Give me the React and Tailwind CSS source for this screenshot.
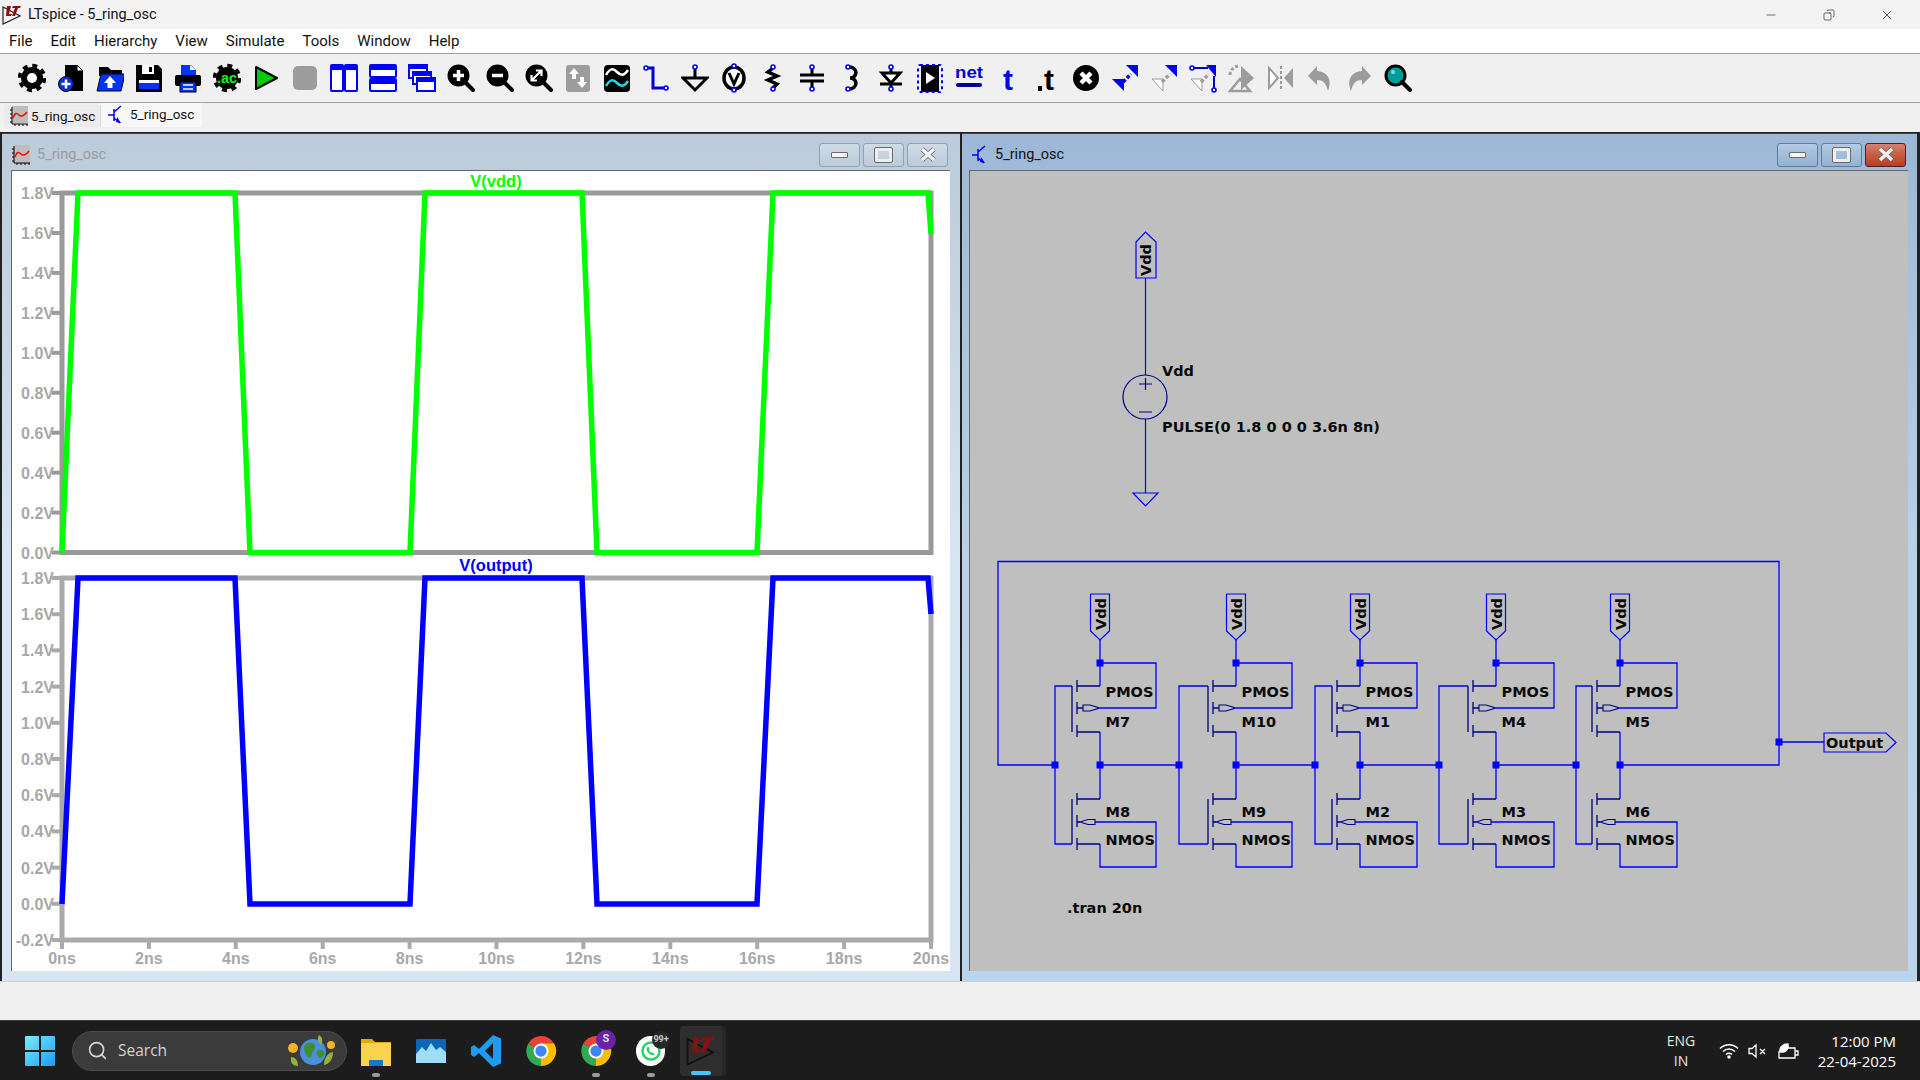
import React from 'react';
import { Search, Minus, X, Copy } from 'lucide-react';

const GREY = '#9c9c9c';

const Mag = ({ children, lens = 'black' }) => (
  <>
    <circle cx="11.5" cy="11.5" r="9.5" fill={lens} stroke="black" strokeWidth="3" />
    <path d="M18 18l8 8" stroke="black" strokeWidth="4" strokeLinecap="round" />
    {children}
  </>
);

const Gear = ({ children }) => (
  <>
    <circle cx="14" cy="14" r="11" fill="black" />
    <circle cx="14" cy="14" r="12.5" fill="none" stroke="black" strokeWidth="3.5" strokeDasharray="5 4.8" />
    {children}
  </>
);

const pin = (x, y) => <circle cx={x} cy={y} r="2" fill="white" stroke="#0000ff" strokeWidth="1.6" />;

// toolbar drawings, in order, each on a 28x28 canvas
const toolIcons = [
  <Gear><circle cx="14" cy="14" r="5" fill="white" /></Gear>,
  <>
    <path d="M8 1h12l6 6v20H8z" fill="black" />
    <path d="M20 1l6 6h-6z" fill="white" stroke="black" />
    <circle cx="9" cy="20" r="7.5" fill="#0033dd" stroke="black" />
    <path d="M9 15.5v9M4.5 20h9" stroke="white" strokeWidth="2.5" />
  </>,
  <>
    <path d="M3 3h9l3 3h11v6H3z" fill="black" />
    <path d="M5 10h24l-4 17H1z" fill="#0033ff" stroke="black" />
    <path d="M14 12l6 7h-3.500v5h-5v-5H8z" fill="white" />
  </>,
  <>
    <path d="M1 1h22l4 4v23H1z" fill="black" />
    <rect x="7" y="1" width="12" height="9" fill="white" />
    <rect x="14" y="3" width="3" height="5" fill="black" />
    <rect x="4" y="16" width="20" height="9" fill="#0033ff" />
    <rect x="4" y="16" width="20" height="3" fill="white" />
  </>,
  <>
    <path d="M7 1h10l5 5v7H7z" fill="#0033ff" />
    <path d="M16 1v5h6" fill="white" />
    <rect x="1" y="11" width="26" height="11" rx="2" fill="black" />
    <rect x="6" y="18" width="16" height="10" fill="#0033ff" stroke="black" />
    <path d="M9 21h10M9 25h10" stroke="white" strokeWidth="1.500" />
  </>,
  <Gear>
    <text x="14" y="19" textAnchor="middle" className="font-['Liberation_Sans'] font-bold text-[15px] fill-[#00ff00]" textLength="20" lengthAdjust="spacingAndGlyphs">.ac</text>
  </Gear>,
  <path d="M4 3l21 11L4 25z" fill="#00cc00" stroke="black" strokeWidth="2" strokeLinejoin="round" />,
  <rect x="2" y="2" width="24" height="24" rx="5" fill={GREY} />,
  <>
    <rect x="1" y="1" width="12" height="26" rx="1" fill="white" stroke="#0000ff" strokeWidth="2" />
    <rect x="15" y="1" width="12" height="26" rx="1" fill="white" stroke="#0000ff" strokeWidth="2" />
    <rect x="1" y="1" width="12" height="5" fill="#0000ff" />
    <rect x="15" y="1" width="12" height="5" fill="#0000ff" />
  </>,
  <>
    <rect x="1" y="1" width="26" height="12" rx="1" fill="white" stroke="#0000ff" strokeWidth="2" />
    <rect x="1" y="15" width="26" height="12" rx="1" fill="white" stroke="#0000ff" strokeWidth="2" />
    <rect x="1" y="1" width="26" height="5" fill="#0000ff" />
    <rect x="1" y="15" width="26" height="5" fill="#0000ff" />
  </>,
  <>
    <rect x="1" y="1" width="18" height="13" fill="white" stroke="#0000ff" strokeWidth="2" />
    <rect x="1" y="1" width="18" height="4" fill="#0000ff" />
    <rect x="5" y="8" width="18" height="12" fill="white" stroke="#0000ff" strokeWidth="2" />
    <rect x="5" y="8" width="18" height="4" fill="#0000ff" />
    <rect x="9" y="14" width="18" height="13" fill="white" stroke="#0000ff" strokeWidth="2" />
    <rect x="9" y="14" width="18" height="4" fill="#0000ff" />
  </>,
  <Mag><path d="M11.500 6v11M6 11.500h11" stroke="white" strokeWidth="3.500" /></Mag>,
  <Mag><path d="M6 11.500h11" stroke="white" strokeWidth="3.500" /></Mag>,
  <Mag><path d="M7 16l9-9M11 6.500h5.500V12M12 16.500H6.500V11" stroke="white" strokeWidth="2.200" fill="none" /></Mag>,
  <>
    <rect x="2" y="1" width="24" height="27" rx="3" fill={GREY} />
    <path d="M10 4l5 6h-3v5H8v-5H5zM18 24l-5-6h3v-5h4v5h3z" fill="white" />
  </>,
  <>
    <rect x="1" y="1" width="26" height="27" rx="4" fill="black" />
    <path d="M3 11c4-7 7-7 11-3s7 4 11-2" stroke="white" strokeWidth="2.500" fill="none" />
    <path d="M3 22c4-7 7-7 11-3s7 4 11-2" stroke="#22d8e8" strokeWidth="2.500" fill="none" />
  </>,
  <>
    <path d="M5 4h6v20h11" stroke="#0000cc" strokeWidth="3" fill="none" />
    {pin(4, 4)}{pin(24, 24)}
  </>,
  <>
    <path d="M14 5v9M2 14h24L14 26z" stroke="black" strokeWidth="3" fill="none" />
    {pin(14, 3)}
  </>,
  <>
    <ellipse cx="14" cy="14" rx="10" ry="11" fill="white" stroke="black" strokeWidth="3.500" />
    <path d="M9 9l5 11 5-11" stroke="black" strokeWidth="3" fill="none" />
    {pin(14, 2)}{pin(14, 26)}
  </>,
  <>
    <path d="M14 4l-5 4 9 4-9 4 9 4-4 4" stroke="black" strokeWidth="3.500" fill="none" />
    {pin(14, 3)}{pin(14, 25)}
  </>,
  <>
    <path d="M14 4v7M14 17v7M2 11h24M2 17h24" stroke="black" strokeWidth="3" />
    {pin(14, 3)}{pin(14, 25)}
  </>,
  <>
    <path d="M11 3c9 0 9 11 1 11 8 0 8 11-1 11" stroke="black" strokeWidth="3.500" fill="none" />
    {pin(10, 3)}{pin(10, 25)}
  </>,
  <>
    <path d="M14 4v20M3 20h22" stroke="black" strokeWidth="3" fill="none" />
    <path d="M5 9h18L14 19z" fill="white" stroke="black" strokeWidth="3" />
    {pin(14, 3)}{pin(14, 25)}
  </>,
  <>
    <rect x="5" y="1" width="18" height="27" rx="1" fill="black" />
    <rect x="2" y="1" width="24" height="27" rx="2" fill="none" stroke="#0000ff" strokeWidth="2" strokeDasharray="3 3" />
    <path d="M10 8l9 6-9 6z" fill="white" />
  </>,
  <>
    <text x="14" y="14" textAnchor="middle" className="font-['Liberation_Sans'] font-bold text-[17px] fill-[#0000cc]" textLength="28" lengthAdjust="spacingAndGlyphs">net</text>
    <path d="M3 21h22" stroke="#000099" strokeWidth="4" strokeLinecap="round" />
  </>,
  <text x="14" y="26" textAnchor="middle" className="font-['Liberation_Sans'] font-bold text-[30px] fill-[#0000ee]">t</text>,
  <>
    <text x="16" y="26" textAnchor="middle" className="font-['Liberation_Sans'] font-bold text-[30px] fill-black">t</text>
    <rect x="5" y="22" width="4" height="5" fill="black" />
  </>,
  <>
    <circle cx="14" cy="14" r="13" fill="black" />
    <path d="M9 9l10 10M19 9L9 19" stroke="white" strokeWidth="4.500" />
  </>,
  <>
    <path d="M27 1v12L15 1z" fill="#0000ee" />
    <path d="M1 15h12v12z" fill="#0000ee" />
    <path d="M12 18l5-5 3-3" stroke="#0000ee" strokeWidth="3.500" strokeDasharray="3.500 2" />
  </>,
  <>
    <path d="M27 1v12L15 1z" fill="#0000ee" />
    <path d="M2 15h11v12z" fill="white" stroke={GREY} />
    <path d="M12 18l5-5 3-3" stroke={GREY} strokeWidth="3.500" strokeDasharray="3.500 2" />
  </>,
  <>
    <path d="M4 4h15" stroke="#0000cc" strokeWidth="2" />
    <path d="M27 1v12L17 1z" fill="#0000ee" />
    <path d="M2 15h11v12z" fill="white" stroke={GREY} />
    <path d="M12 18l8-8" stroke={GREY} strokeWidth="3.500" strokeDasharray="3.500 2" />
    <path d="M25 12v14" stroke="#0000cc" strokeWidth="2" />
    {pin(3, 4)}{pin(25, 26)}
  </>,
  <>
    <path d="M13 2l13 12-13 12z" fill={GREY} />
    <path d="M10 2C5 3 2 7 2 11" stroke={GREY} strokeWidth="3" strokeDasharray="3 2" fill="none" />
    <path d="M12 15L2 27h20z" fill="none" stroke={GREY} strokeWidth="2.500" />
  </>,
  <>
    <path d="M2 4l9 10-9 10z" fill="white" stroke={GREY} strokeWidth="2" />
    <path d="M26 4l-9 10 9 10z" fill={GREY} />
    <path d="M14 2v24" stroke={GREY} strokeWidth="2" strokeDasharray="3 2" />
  </>,
  <path d="M11 2L2 12l9 9v-5c6 0 9 3 11 11 4-10 1-19-11-20z" fill={GREY} />,
  <path d="M17 2l9 10-9 9v-5c-6 0-9 3-11 11C2 17 5 8 17 7z" fill={GREY} />,
  <Mag lens="#009c9c"><circle cx="9" cy="8" r="2" fill="#7fe0e0" /></Mag>,
];

const WaveIcon = () => (
  <svg width="18" height="20" viewBox="0 0 18 20">
    <rect x="2" width="16" height="17" fill="#bdbdbd" />
    <path d="M2 1v17h16M0 4h2M0 8h2M0 12h2M0 16h2M5 18v2M9 18v2M13 18v2M17 18v2" stroke="black" fill="none" />
    <path d="M3 12c2-6 4-5 6-3s5 1 8-3" stroke="#ff0000" strokeWidth="1.500" fill="none" />
  </svg>
);

const NpnIcon = () => (
  <svg width="15" height="20" viewBox="0 0 15 20">
    <path d="M0 10h6M6 4v12M6 7l7-6M6 13l6 5" stroke="#0000ff" strokeWidth="1.500" fill="none" />
    <path d="M9 12l4 6-5-1z" fill="#0000ff" />
  </svg>
);

const WinButton = ({ kind, active, red }) => {
  const cls = red
    ? 'bg-gradient-to-b from-[#d8806e] via-[#c45c45] to-[#b83d22] border-[#4a2030]'
    : active
    ? 'bg-gradient-to-b from-[#b4cbe3] via-[#a3bdd8] to-[#95b2d1] border-[#5f7a9a]'
    : 'bg-gradient-to-b from-[#cfdbe6] to-[#bccbda] border-[#8ea2b8]';
  return (
    <div className={`w-[41px] h-[24px] rounded-[3px] border flex items-center justify-center ${cls}`}>
      {kind === 'min' && <div className="w-[17px] h-[6px] bg-[#f6f6f6] border border-[#6a6a6a] rounded-[1px]" />}
      {kind === 'max' && <div className="w-[17px] h-[14px] bg-transparent border-[3px] border-[#eeeeee] outline outline-1 outline-[#6a6a6a] rounded-[1px]" />}
      {kind === 'close' && (
        <svg width="18" height="15" viewBox="0 0 18 15">
          <path d="M3 2l12 11M15 2L3 13" stroke="#666" strokeWidth="5" />
          <path d="M3 2l12 11M15 2L3 13" stroke="#f2f2f2" strokeWidth="3.500" />
        </svg>
      )}
    </div>
  );
};

const ChildWindow = ({ icon, title, active, className, children }) => (
  <div className={`flex flex-col border-t border-[#444] ${active ? 'bg-gradient-to-b from-[#9db8d7] via-[#b9d2ea] to-[#b9d4ec]' : 'bg-gradient-to-b from-[#bccbd9] via-[#d8e5f2] to-[#d8e5f2]'} ${className}`}>
    <div className="h-[36px] pt-[5px] flex items-center">
      <div className="w-[20px] flex items-center justify-center">{icon}</div>
      <span className={`ml-[6px] text-[14.500px] ${active ? 'text-[#111]' : 'text-[#9a9a9a]'}`}>{title}</span>
      <div className="ml-auto flex gap-[3px] mr-[2px]">
        <WinButton kind="min" active={active} />
        <WinButton kind="max" active={active} />
        <WinButton kind="close" active={active} red={active} />
      </div>
    </div>
    {children}
  </div>
);

const x0 = 62;
const nsPx = 43.45;
const upperV = ['1.8V', '1.6V', '1.4V', '1.2V', '1.0V', '0.8V', '0.6V', '0.4V', '0.2V', '0.0V'];
const lowerV = [...upperV, '-0.2V'];
const nsLabels = [0, 2, 4, 6, 8, 10, 12, 14, 16, 18, 20];
const wavePts = (hi, lo, endY) =>
  [[62, lo], [78, hi], [235, hi], [250, lo], [410, lo], [425, hi], [582, hi], [597, lo], [757, lo], [773, hi], [928, hi], [931, endY]]
    .map((p) => p.join(',')).join(' ');

const axisLabel = "font-['Liberation_Sans'] font-bold text-[16px] fill-[#a8a8a8]";

const WaveformPane = () => (
  <svg viewBox="12 171 938 800" className="block w-[939px] h-[801px] bg-white border-l border-t border-[#666]">
    {/* upper pane */}
    <rect x="62" y="193" width="869" height="359.500" fill="none" stroke="#999999" strokeWidth="5" />
    {upperV.map((v, i) => {
      const y = 193 + i * 39.95;
      return (
        <g key={v}>
          <path d={`M52 ${y}H62`} stroke="#999999" strokeWidth="4" />
          <text x="54" y={y + 6} textAnchor="end" className={axisLabel}>{v}</text>
        </g>
      );
    })}
    <polyline points={wavePts(193, 552.5, 234)} fill="none" stroke="#00ff00" strokeWidth="5.500" />
    <text x="496" y="187" textAnchor="middle" className="font-['Liberation_Sans'] font-bold text-[16.500px] fill-[#00ff00]">V(vdd)</text>

    {/* lower pane */}
    <rect x="62" y="578" width="869" height="362" fill="none" stroke="#aaaaaa" strokeWidth="5" />
    {lowerV.map((v, i) => {
      const y = 578 + i * 36.2;
      return (
        <g key={v}>
          <path d={`M52 ${y}H62`} stroke="#aaaaaa" strokeWidth="4" />
          <text x="54" y={y + 6} textAnchor="end" className={axisLabel}>{v}</text>
        </g>
      );
    })}
    {nsLabels.map((ns) => {
      const x = x0 + (ns / 2) * nsPx * 2;
      return (
        <g key={ns}>
          <path d={`M${x} 940V949`} stroke="#aaaaaa" strokeWidth="4" />
          <text x={x} y="964" textAnchor="middle" className={axisLabel}>{ns}ns</text>
        </g>
      );
    })}
    <polyline points={wavePts(578, 904, 614)} fill="none" stroke="#0000ff" strokeWidth="5.500" />
    <text x="496" y="571" textAnchor="middle" className="font-['Liberation_Sans'] font-bold text-[16.500px] fill-[#0000ff]">V(output)</text>
  </svg>
);

const WIRE = '#0000ff';
const SYM = '#000080';
const schemText = "font-['DejaVu_Sans'] font-bold text-[14.500px] fill-[#0a0a0a]";

const Dot = ({ x, y }) => <rect x={x - 3.5} y={y - 3.5} width="7" height="7" fill={WIRE} />;

const VddTag = ({ x, top, tip, shoulder }) => (
  <g>
    <path d={`M${x - 9.5} ${top}V${shoulder}L${x} ${tip}L${x + 9.5} ${shoulder}V${top}Z`} fill="none" stroke={WIRE} strokeWidth="1.200" />
    <text transform={`translate(${x + 6} 630) rotate(-90)`} className={schemText}>Vdd</text>
  </g>
);

const inverters = [
  { rail: 1055, d: 1100, box: 1156, p: 'M7', n: 'M8' },
  { rail: 1179, d: 1236, box: 1292, p: 'M10', n: 'M9' },
  { rail: 1315, d: 1360, box: 1417, p: 'M1', n: 'M2' },
  { rail: 1439, d: 1496, box: 1554, p: 'M4', n: 'M3' },
  { rail: 1576, d: 1620, box: 1677, p: 'M5', n: 'M6' },
];

const Inverter = ({ rail, d, box, p, n }) => {
  const g = d - 28;
  const c = d - 23;
  return (
    <g>
      <VddTag x={d} top={594} tip={640} shoulder={631} />
      {/* wires */}
      <path d={`M${d} 640V686M${d} 663H${box}V708H${d - 2}M${d} 732V799M${d} 844V867H${box}V822H${d - 5}M${rail} 765V686H${g}M${rail} 765V844H${g}`} fill="none" stroke={WIRE} strokeWidth="1.300" />
      {/* mos symbols */}
      <path d={`M${g} 686V732M${g} 799V844M${c} 680V692M${c} 702V714M${c} 725V737M${c} 793V805M${c} 815V827M${c} 838V850M${c} 686H${d}M${c} 732H${d}M${c} 799H${d}M${c} 844H${d}M${c} 708H${c + 6}M${c} 822H${c + 3}`} fill="none" stroke={SYM} strokeWidth="1.300" />
      <path d={`M${c + 6} 705H${c + 13}L${c + 21} 707.500V708.500L${c + 13} 711H${c + 6}Z`} fill="none" stroke={SYM} strokeWidth="1.100" />
      <path d={`M${c + 3} 822L${c + 11} 819.500H${c + 18}V824.500H${c + 11}Z`} fill="none" stroke={SYM} strokeWidth="1.100" />
      <Dot x={d} y={663} />
      <Dot x={d} y={765} />
      <Dot x={rail} y={765} />
      <text x={d + 5.5} y="697" className={schemText}>PMOS</text>
      <text x={d + 5.5} y="727" className={schemText}>{p}</text>
      <text x={d + 5.5} y="817" className={schemText}>{n}</text>
      <text x={d + 5.5} y="845" className={schemText}>NMOS</text>
    </g>
  );
};

const SchematicPane = () => (
  <svg viewBox="970 171 938 800" className="block w-[939px] h-[801px] bg-[#bfbfbf] border-l border-t border-[#666]">
    {/* supply */}
    <path d="M1136 278V242L1145.500 232L1156 242V278Z" fill="none" stroke={WIRE} strokeWidth="1.200" />
    <text transform="translate(1151 276) rotate(-90)" className={schemText}>Vdd</text>
    <path d="M1145.500 278V375M1145.500 419V493M1133 493H1158L1145.500 506Z" fill="none" stroke={WIRE} strokeWidth="1.200" />
    <circle cx="1145" cy="397" r="22" fill="none" stroke={SYM} strokeWidth="1.200" />
    <path d="M1145.500 378V390M1139 384H1152M1139 412H1152" stroke={SYM} strokeWidth="1.200" />
    <text x="1162" y="376" className={schemText}>Vdd</text>
    <text x="1162" y="432" className={schemText}>PULSE(0 1.8 0 0 0 3.6n 8n)</text>

    {/* ring */}
    <path d="M1055 765H998V561.500H1779V765H1620M1100 765H1179M1236 765H1315M1360 765H1439M1496 765H1576M1779 742H1824" fill="none" stroke={WIRE} strokeWidth="1.300" />
    {inverters.map((inv) => <Inverter key={inv.p} {...inv} />)}
    <Dot x={1779} y={742} />
    <path d="M1824 733H1886L1896 742.500L1886 752H1824Z" fill="none" stroke={WIRE} strokeWidth="1.200" />
    <text x="1826" y="748" className={schemText}>Output</text>
    <text x="1067" y="913" className={schemText}>.tran 20n</text>
  </svg>
);

const menus = ['File', 'Edit', 'Hierarchy', 'View', 'Simulate', 'Tools', 'Window', 'Help'];

const LtLogo = ({ size = 20, dark }) => (
  <svg width={size} height={size} viewBox="0 0 20 20">
    <path d="M1 2l17 9L1 19z" fill="none" stroke={dark ? '#111' : '#222'} strokeWidth="1.200" />
    <path d="M5 1h4l-2 8h3l-1 2H4zM11 1h8l-1 2h-2l-3 8h-3l3-8h-3z" fill="#8a1010" />
  </svg>
);

const TaskSlot = ({ children, dot, className = '' }) => (
  <div className={`relative w-[55px] h-[60px] flex items-center justify-center ${className}`}>
    {children}
    {dot && <div className="absolute bottom-[4px] left-1/2 -translate-x-1/2 w-[8px] h-[4px] rounded-full bg-[#9a9a9a]" />}
  </div>
);

const ChromeIcon = ({ size = 36 }) => (
  <svg width={size} height={size} viewBox="0 0 48 48">
    <path d="M24 24L7 14a20 20 0 0 1 34.500 0z" fill="#ea4335" />
    <path d="M24 44A20 20 0 0 1 7 14l17 10z" fill="#34a853" />
    <path d="M24 44a20 20 0 0 0 17.500-30H24z" fill="#fbbc04" />
    <circle cx="24" cy="24" r="10" fill="white" />
    <circle cx="24" cy="24" r="7.500" fill="#4285f4" />
  </svg>
);

export default function App() {
  return (
    <div className="w-[1920px] h-[1080px] flex flex-col overflow-hidden bg-[#f0f0f0] font-['Roboto'] text-[#111]">
      {/* title bar */}
      <div className="h-[29px] bg-[#f3f3f3] flex items-center pl-[2px] shrink-0">
        <LtLogo />
        <span className="ml-[6px] text-[14.500px]">LTspice - 5_ring_osc</span>
        <div className="ml-auto flex items-center">
          <div className="w-[58px] flex justify-center"><Minus size={14} strokeWidth={1} /></div>
          <div className="w-[58px] flex justify-center"><Copy size={12} strokeWidth={1.2} className="-scale-x-100" /></div>
          <div className="w-[58px] flex justify-center mr-[4px]"><X size={16} strokeWidth={1} /></div>
        </div>
      </div>

      {/* menu */}
      <div className="h-[24px] bg-white flex items-center pl-[9px] gap-[18px] text-[15px] shrink-0">
        {menus.map((m) => <span key={m}>{m}</span>)}
      </div>

      {/* toolbar */}
      <div className="h-[50px] bg-[#f0f0f0] border-y border-[#a0a0a0] flex items-center pl-[12px] shrink-0">
        {toolIcons.map((icon, i) => (
          <div key={i} className="w-[39.050px] flex justify-center">
            <svg width="28" height="40" viewBox="0 -6 28 40">{icon}</svg>
          </div>
        ))}
      </div>

      {/* tabs */}
      <div className="h-[30px] flex items-end pl-[4px] pb-[5px] border-b border-[#222] shrink-0 text-[13.500px]">
        <div className="w-[97px] h-[22px] flex items-center gap-[3px] pl-[6px] bg-[#ececec] border-r border-[#ddd]">
          <WaveIcon />
          <span>5_ring_osc</span>
        </div>
        <div className="w-[101px] h-[24px] flex items-center gap-[7px] pl-[7px] bg-[#f8f8f8]">
          <NpnIcon />
          <span className="-mt-px">5_ring_osc</span>
        </div>
      </div>

      {/* mdi area */}
      <div className="h-[848px] flex items-stretch pl-[2px] shrink-0 bg-[#222]">
        <ChildWindow className="w-[958px] pl-[9px] pr-[10px]" title="5_ring_osc" icon={<WaveIcon />}>
          <WaveformPane />
        </ChildWindow>
        <div className="w-[2px]" />
        <ChildWindow className="w-[955px] pl-[7px] pr-[9px]" title="5_ring_osc" active icon={<NpnIcon />}>
          <SchematicPane />
        </ChildWindow>
      </div>

      <div className="h-[39px] bg-[#f0f0f0] border-t border-[#cfcfcf] shrink-0" />

      {/* taskbar */}
      <div className="h-[60px] bg-[#1c1c1c] border-t border-[#3a3a3a] flex items-center pl-[12px] shrink-0 text-white">
        <div className="w-[56px] flex justify-center">
          <svg width="30" height="30" viewBox="0 0 30 30">
            <defs>
              <linearGradient id="winlogo" x1="0" y1="0" x2="1" y2="1">
                <stop offset="0" stopColor="#7cecff" />
                <stop offset="1" stopColor="#1a9cf5" />
              </linearGradient>
            </defs>
            <path d="M0 1a1 1 0 0 1 1-1h13v14H0zM16 0h13a1 1 0 0 1 1 1v13H16zM0 16h14v14H1a1 1 0 0 1-1-1zM16 16h14v13a1 1 0 0 1-1 1H16z" fill="url(#winlogo)" />
          </svg>
        </div>
        <div className="ml-[4px] w-[275px] h-[40px] rounded-full bg-[#3b3b3b] border border-[#4c4c4c] flex items-center pl-[14px] relative">
          <Search size={21} strokeWidth={1.800} className="text-[#d8d8d8]" />
          <span className="ml-[10px] text-[15.500px] text-[#d4d4d4] font-['Open_Sans']">Search</span>
          <svg width="50" height="36" viewBox="0 0 50 36" className="absolute right-[9px] top-[1px]">
            <circle cx="26" cy="19" r="13" fill="#4a90d9" />
            <path d="M18 12c4-3 9-3 10 1s-3 4-3 8-3 5-5 2-4-8-2-11zM30 18c3-2 6-1 7 1s-2 6-4 6-4-5-3-7z" fill="#3f8f2e" />
            <circle cx="6" cy="15" r="5" fill="#f0b429" />
            <circle cx="44" cy="12" r="4" fill="#f0b429" />
            <path d="M4 24c4 0 7 3 7 9-5 0-8-3-7-9zM46 19c0 8-4 12-9 13 0-6 3-12 9-13zM32 2c4 2 4 7 2 10-3-3-4-7-2-10z" fill="#8fb53a" />
          </svg>
        </div>
        <TaskSlot dot className="ml-[1px]">
          <svg width="30" height="30" viewBox="0 0 30 30">
            <path d="M0 3h11l3 3h16v24H0z" fill="#e3a80e" />
            <rect y="7" width="30" height="23" fill="#fcd34d" />
            <path d="M8 24h14v6H8z" fill="#1478c8" />
          </svg>
        </TaskSlot>
        <TaskSlot>
          <svg width="30" height="24" viewBox="0 0 30 24">
            <rect width="30" height="24" rx="1" fill="#0b66b8" />
            <path d="M0 15l6-7 4 4 5-8 5 7 4-3 6 5v11H0z" fill="#9fdcf8" />
          </svg>
        </TaskSlot>
        <TaskSlot>
          <svg width="30" height="32" viewBox="0 0 30 32">
            <path d="M22 0l8 3.500v25L22 32 8 18 3 22 0 20v-8l3-2 5 4z" fill="#1f9cf0" />
            <path d="M22 8l-8 8 8 8z" fill="#1c1c1c" />
          </svg>
        </TaskSlot>
        <TaskSlot><ChromeIcon /></TaskSlot>
        <TaskSlot dot>
          <ChromeIcon />
          <div className="absolute top-[9px] left-[28px] w-[20px] h-[20px] rounded-full bg-[#6b21a8] flex items-center justify-center text-[11px] font-bold text-[#ddd]">S</div>
        </TaskSlot>
        <TaskSlot dot>
          <div className="w-[29px] h-[30px] rounded-full bg-white flex items-center justify-center">
            <svg width="20" height="20" viewBox="0 0 20 20">
              <circle cx="10" cy="10" r="8.500" fill="none" stroke="#25d366" strokeWidth="2.500" />
              <path d="M6.500 6c1-1 2 1 2 2s-1 1 0 2 2 2 3 1.500 2 1 1.500 2-3 1-5.500-1.500S5.500 7 6.500 6z" fill="#25d366" />
            </svg>
          </div>
          <div className="absolute top-[10px] left-[29px] w-[18px] h-[18px] rounded-full bg-[#26262c] flex items-center justify-center text-[9px] font-bold text-[#ccc]">99+</div>
        </TaskSlot>
        <div className="relative w-[46px] h-[50px] ml-[2px] rounded-[4px] bg-[#2e2e2e] border-r-[4px] border-[#262626] flex items-center justify-center">
          <LtLogo size={30} dark />
          <div className="absolute bottom-[1px] left-1/2 -translate-x-1/2 w-[20px] h-[4px] rounded-full bg-[#4cc2ff]" />
        </div>

        <div className="ml-auto flex items-center pr-[24px]">
          <div className="w-[40px] text-center text-[14px] leading-[20px] text-[#e6e6e6] font-['Open_Sans']">ENG<br />IN</div>
          <div className="ml-[13px] w-[29px] flex justify-center">
            <svg width="20" height="16" viewBox="0 0 20 16" fill="none" stroke="white" strokeWidth="1.500">
              <path d="M1 5.500c5-5 13-5 18 0M4 8.500c3.500-3.500 8.500-3.500 12 0M7 11.500c1.700-1.700 4.300-1.700 6 0" />
              <circle cx="10" cy="14" r="1" fill="white" />
            </svg>
          </div>
          <div className="w-[29px] flex justify-center">
            <svg width="20" height="16" viewBox="0 0 20 16" fill="none" stroke="white" strokeWidth="1.300">
              <path d="M1 5.500h3L8 2v12l-4-3.500H1zM12 6l5 5M17 6l-5 5" />
            </svg>
          </div>
          <div className="w-[32px] flex justify-center">
            <svg width="21" height="16" viewBox="0 0 21 16" fill="none" stroke="white" strokeWidth="1.300">
              <path d="M3 5h14v10H1V8M17 8h3v4h-3" />
              <path d="M2 9C1 4 5 1 10 1c1 4-1 8-5 8z" fill="white" />
            </svg>
          </div>
          <div className="w-[92px] text-right text-[15px] leading-[20px] text-white font-['Open_Sans']">12:00 PM<br />22-04-2025</div>
        </div>
      </div>
    </div>
  );
}
